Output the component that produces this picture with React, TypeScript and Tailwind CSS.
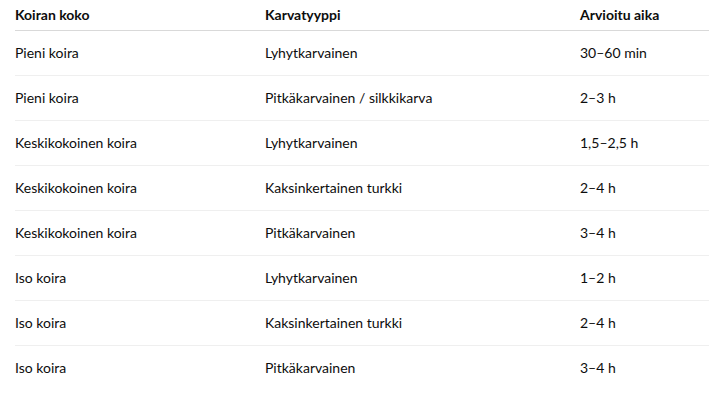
import React from "react";

const rows: [string, string, string][] = [
  ["Pieni koira", "Lyhytkarvainen", "30–60 min"],
  ["Pieni koira", "Pitkäkarvainen / silkkikarva", "2–3 h"],
  ["Keskikokoinen koira", "Lyhytkarvainen", "1,5–2,5 h"],
  ["Keskikokoinen koira", "Kaksinkertainen turkki", "2–4 h"],
  ["Keskikokoinen koira", "Pitkäkarvainen", "3–4 h"],
  ["Iso koira", "Lyhytkarvainen", "1–2 h"],
  ["Iso koira", "Kaksinkertainen turkki", "2–4 h"],
  ["Iso koira", "Pitkäkarvainen", "3–4 h"],
];

export default function App() {
  return (
    <div
      className="w-[709px] h-[401px] bg-white overflow-hidden text-[14px] text-[#0d0d0d]"
      style={{ fontFamily: 'Lato, "Open Sans", sans-serif' }}
    >
      <div className="ml-[15px]">
        <div className="grid grid-cols-[250px_315px_1fr] h-[31px] pb-[2px] items-center border-b border-[#d9d9d9] font-bold">
          <div>Koiran koko</div>
          <div>Karvatyyppi</div>
          <div>Arvioitu aika</div>
        </div>
        {rows.map((r, i) => (
          <div
            key={i}
            className={`grid grid-cols-[250px_315px_1fr] h-[45px] pb-[2px] items-center ${
              i < rows.length - 1 ? "border-b border-[#efefef]" : ""
            }`}
          >
            <div>{r[0]}</div>
            <div>{r[1]}</div>
            <div>{r[2]}</div>
          </div>
        ))}
      </div>
    </div>
  );
}
